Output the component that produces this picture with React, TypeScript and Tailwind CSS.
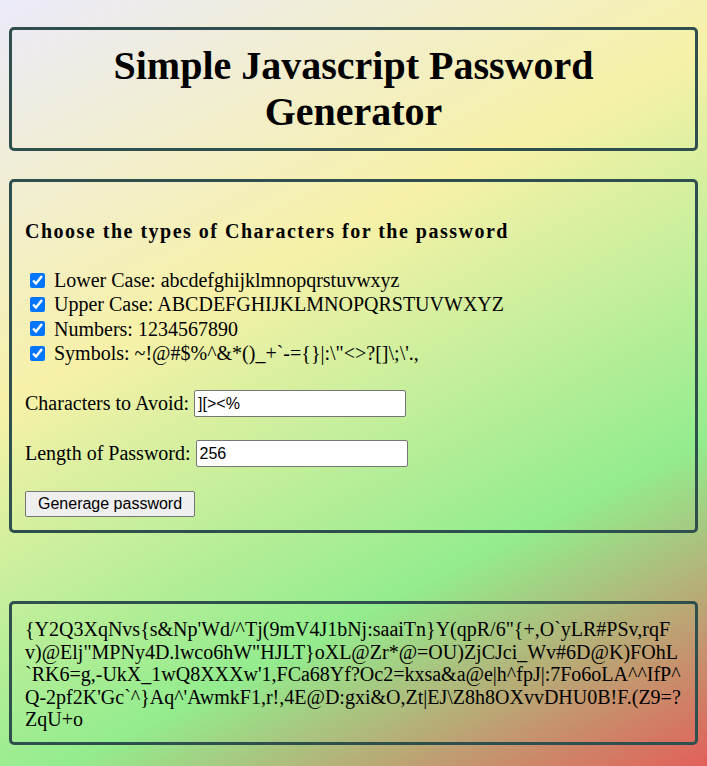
import { useState } from 'react'

const SYMBOLS = '~!@#$%^&*()_+`-={}|:\\"<>?[]\\;\\\'.,'

const TYPES = [
  { key: 'lower', label: 'Lower Case: abcdefghijklmnopqrstuvwxyz' },
  { key: 'upper', label: 'Upper Case: ABCDEFGHIJKLMNOPQRSTUVWXYZ' },
  { key: 'numbers', label: 'Numbers: 1234567890' },
  { key: 'symbols', label: `Symbols: ${SYMBOLS}` },
]

const PASSWORD =
  '{Y2Q3XqNvs{s&Np\'Wd/^Tj(9mV4J1bNj:saaiTn}Y(qpR/6"{+,O`yLR#PSv,rqFv)@Elj"MPNy4D.lwco6hW"HJLT}oXL@Zr*@=OU)ZjCJci_Wv#6D@K)FOhL`RK6=g,-UkX_1wQ8XXXw\'1,FCa68Yf?Oc2=kxsa&a@e|h^fpJ|:7Fo6oLA^^IfP^Q-2pf2K\'Gc`^}Aq^\'AwmkF1,r!,4E@D:gxi&O,Zt|EJ\\Z8h8OXvvDHU0B!F.(Z9=?ZqU+o'

export default function App() {
  const [checked, setChecked] = useState<Record<string, boolean>>({ lower: true, upper: true, numbers: true, symbols: true })
  const [avoid, setAvoid] = useState('][><%')
  const [length, setLength] = useState('256')

  return (
    <div className="h-screen overflow-hidden bg-[linear-gradient(153deg,#ebeafa_0%,#f7f1a8_36%,#93ec8e_71%,#e2605a_100%)] px-[9px] pt-[27px] font-['Liberation_Serif',serif] text-black">
      {/* title */}
      <div className="rounded-[5px] border-[3px] border-[#2f4f4f] px-3 py-[13px]">
        <h1 className="m-0 text-center text-[40px] leading-[46px] font-bold">Simple Javascript Password Generator</h1>
      </div>

      {/* options */}
      <div className="mt-[28px] rounded-[5px] border-[3px] border-[#2f4f4f] px-[13px] pt-[38px] pb-[13px]">
        <h3 className="m-0 text-[20px] leading-[23px] font-bold tracking-[1.5px]">Choose the types of Characters for the password</h3>

        <div className="mt-[25px] text-[20px] leading-[24.3px]">
          {TYPES.map(t => (
            <label key={t.key} className="flex items-center">
              <input
                type="checkbox"
                checked={checked[t.key]}
                onChange={() => setChecked(p => ({ ...p, [t.key]: !p[t.key] }))}
                className="ml-[5px] mr-[9px] h-[15px] w-[15px] accent-[#0075ff]"
              />
              <span>{t.label}</span>
            </label>
          ))}
        </div>

        <div className="mt-[25px] flex items-center gap-[5px] text-[20px] leading-[23px]">
          <span>Characters to Avoid:</span>
          <input
            value={avoid}
            onChange={e => setAvoid(e.target.value)}
            className="h-[27px] w-[212px] rounded-[2px] border border-[#767676] bg-white px-[3px] font-['Liberation_Sans',Arial,sans-serif] text-[16px] outline-none"
          />
        </div>

        <div className="mt-[23px] flex items-center gap-[5px] text-[20px] leading-[23px]">
          <span>Length of Password:</span>
          <input
            value={length}
            onChange={e => setLength(e.target.value)}
            className="h-[27px] w-[212px] rounded-[2px] border border-[#767676] bg-white px-[3px] font-['Liberation_Sans',Arial,sans-serif] text-[16px] outline-none"
          />
        </div>

        <button className="mt-[24px] block h-[26px] rounded-[2px] border border-[#767676] bg-[#efefef] px-[12px] font-['Liberation_Sans',Arial,sans-serif] text-[16px] leading-none">
          Generage password
        </button>
      </div>

      {/* result */}
      <div className="mt-[68px] rounded-[5px] border-[3px] border-[#2f4f4f] px-[13px] pt-[14px] pb-[11px]">
        <p className="m-0 text-[20px] leading-[22.5px] break-all">{PASSWORD}</p>
      </div>
    </div>
  )
}
